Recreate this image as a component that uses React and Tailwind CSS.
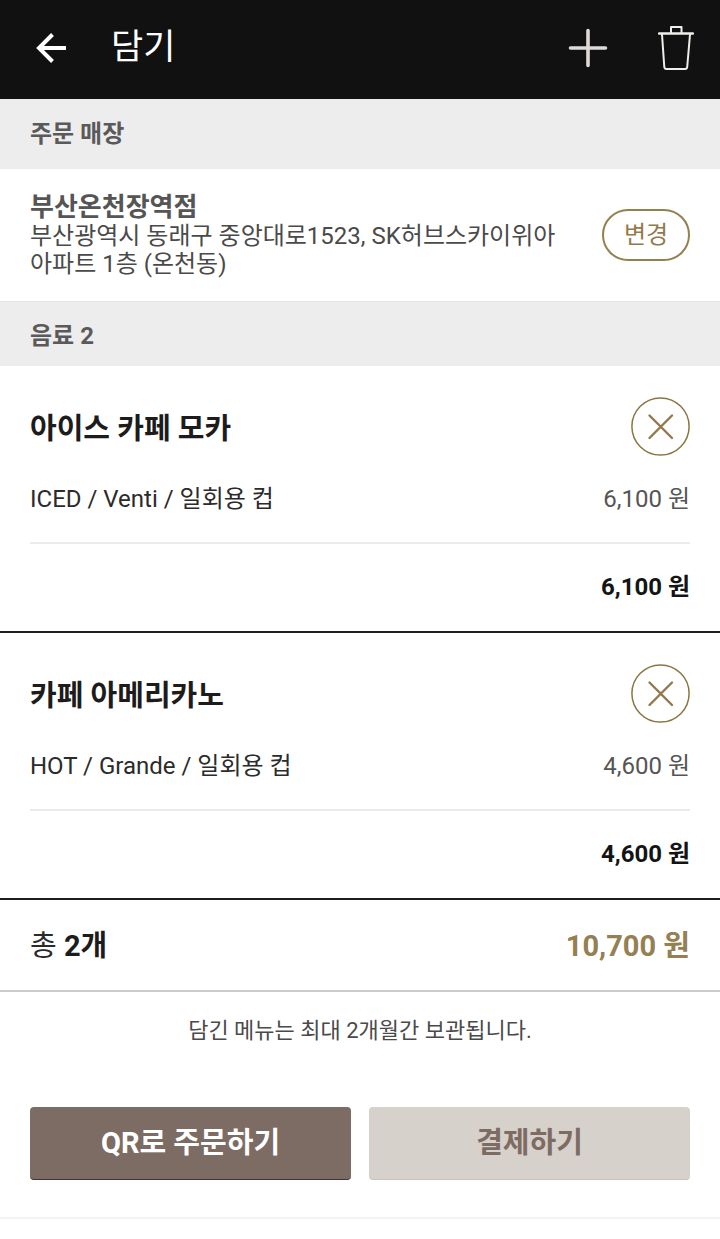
import React, { useState } from "react";

/* =======================
   Data
======================= */
const STORE = {
  name: "부산온천장역점",
  address: "부산광역시 동래구 중앙대로1523, SK허브스카이위아아파트 1층 (온천동)",
};

const DRINKS = [
  { id: 1, name: "아이스 카페 모카", options: "ICED / Venti / 일회용 컵", price: 6100 },
  { id: 2, name: "카페 아메리카노", options: "HOT / Grande / 일회용 컵", price: 4600 },
];

const formatPrice = (value) => `${value.toLocaleString("en-US")} 원`;

/* =======================
   Icons
======================= */
const BackIcon = () => (
  <svg width="30" height="30" viewBox="0 0 30 30" fill="none" stroke="#fff" strokeWidth="4">
    <path d="M30 15H3" />
    <path d="M16.5 1.5L3 15L16.5 28.5" />
  </svg>
);

const PlusIcon = () => (
  <svg
    width="40"
    height="40"
    viewBox="0 0 40 40"
    fill="none"
    stroke="#dedad6"
    strokeWidth="3.6"
    strokeLinecap="round"
  >
    <path d="M20 2.5V37.5M2.5 20H37.5" />
  </svg>
);

const TrashIcon = () => (
  <svg
    width="36"
    height="46"
    viewBox="0 0 36 46"
    fill="none"
    stroke="#f0eeea"
    strokeWidth="2"
    strokeLinecap="round"
    strokeLinejoin="round"
  >
    <path d="M1 8.5H35" strokeWidth="2.4" />
    <path d="M13 7.5V2H23.5V7.5" />
    <path d="M4 9.5L6.3 42Q6.5 44 8.5 44H27Q29 44 29.2 42L32 9.5" />
  </svg>
);

const RemoveIcon = () => (
  <svg
    width="59"
    height="59"
    viewBox="0 0 59 59"
    fill="none"
    stroke="#93794a"
    strokeLinecap="round"
  >
    <circle cx="29.5" cy="29.5" r="28.6" stroke="#8a7642" strokeWidth="1.5" />
    <path d="M18.5 18.5L41 41M41 18.5L18.5 41" strokeWidth="2.4" />
  </svg>
);

/* =======================
   Cart Item
======================= */
const CartItem = ({ item, onRemove }) => (
  <li className="border-b-2 border-[#201c1f] px-[30px] pt-[31px]">
    <div className="flex items-center justify-between">
      <h3 className="pt-1 text-[29px] leading-9 font-bold text-[#1c1c1c]">{item.name}</h3>
      <button
        type="button"
        aria-label={`${item.name} 삭제`}
        onClick={() => onRemove(item.id)}
        className="rounded-full"
      >
        <RemoveIcon />
      </button>
    </div>

    <div className="mt-[25px] flex items-center justify-between border-b-2 border-[#ebebeb] pb-[25px] text-2xl leading-9">
      <p className="text-[#2b2b2b]">{item.options}</p>
      <p className="text-[#555]">{formatPrice(item.price)}</p>
    </div>

    <p className="pt-[25px] pb-[26px] text-right text-2xl leading-9 font-bold text-[#141414]">
      {formatPrice(item.price)}
    </p>
  </li>
);

/* =======================
   Cart Page
======================= */
const App = () => {
  const [items, setItems] = useState(DRINKS);

  const total = items.reduce((sum, item) => sum + item.price, 0);

  const handleRemove = (id) => {
    setItems((prev) => prev.filter((item) => item.id !== id));
  };

  return (
    <div className="min-h-screen bg-white font-['Roboto','Noto_Sans_CJK_KR',sans-serif] text-[#4a4a4a]">
      {/* Header */}
      <header className="flex h-[99px] items-center bg-[#111] pr-[26px] pb-[3px] pl-9">
        <button type="button" aria-label="뒤로">
          <BackIcon />
        </button>
        <h1 className="ml-[45px] flex-1 text-[35px] leading-[52px] text-white">담기</h1>
        <button type="button" aria-label="메뉴 추가">
          <PlusIcon />
        </button>
        <button type="button" aria-label="전체 삭제" className="ml-[50px]">
          <TrashIcon />
        </button>
      </header>

      <main>
        {/* Store */}
        <h2 className="bg-[#ededed] px-[30px] py-[17px] text-2xl leading-9 font-bold text-[#5a5a5a]">
          주문 매장
        </h2>
        <section className="flex items-center justify-between gap-10 px-[30px] py-[23px]">
          <div>
            <p className="text-[26px] leading-[30px] font-bold text-[#555]">{STORE.name}</p>
            <p className="text-2xl leading-7 break-all">{STORE.address}</p>
          </div>
          <button
            type="button"
            className="h-[52px] w-[88px] shrink-0 rounded-full border-2 border-[#93804f] text-2xl text-[#93794a]"
          >
            변경
          </button>
        </section>

        {/* Drinks */}
        <h2 className="border-t border-[#e6e6e6] bg-[#ededed] px-[30px] pt-4 pb-3 text-2xl leading-9 font-bold text-[#5a5a5a]">
          음료 {items.length}
        </h2>
        <ul>
          {items.map((item) => (
            <CartItem key={item.id} item={item} onRemove={handleRemove} />
          ))}
        </ul>

        {/* Total */}
        <div className="flex items-center justify-between border-b-2 border-[#cbcbcb] px-[30px] pt-7 pb-[26px] text-[29px] leading-9">
          <p className="text-[#2b2b2b]">
            총 <strong className="font-bold text-[#1c1c1c]">{items.length}개</strong>
          </p>
          <p className="font-bold text-[#948052]">{formatPrice(total)}</p>
        </div>

        <p className="pt-[21px] text-center text-[22px] leading-9">담긴 메뉴는 최대 2개월간 보관됩니다.</p>

        {/* Actions */}
        <div className="mt-[58px] grid grid-cols-2 gap-[18px] border-b-2 border-[#f3f3f3] px-[30px] pb-[37px]">
          <button
            type="button"
            className="h-[73px] rounded-sm border-b border-[#43332f] bg-[#7c6c63] pt-0.5 text-[29px] font-bold text-white"
          >
            QR로 주문하기
          </button>
          <button
            type="button"
            className="h-[73px] rounded-sm border-b border-[#c9c4be] bg-[#d7d1cb] pt-0.5 text-[29px] font-bold text-[#7c6c63]"
          >
            결제하기
          </button>
        </div>
      </main>
    </div>
  );
};

export default App;
